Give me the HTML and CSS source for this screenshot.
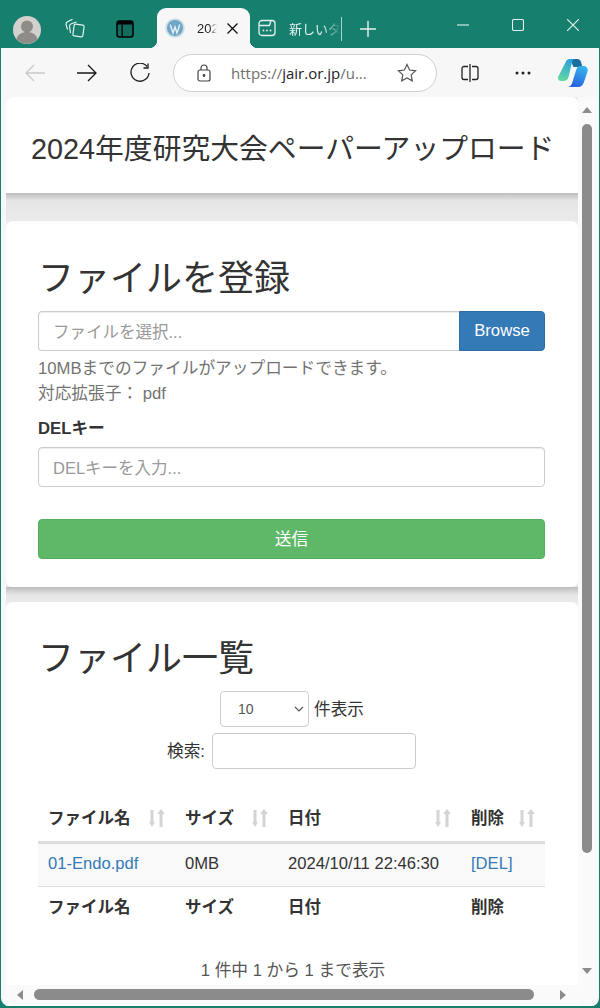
FILE: index.html
```html
<!DOCTYPE html>
<html lang="ja">
<head>
<meta charset="utf-8">
<title>2024年度研究大会ペーパーアップロード</title>
<link rel="stylesheet" href="styles.css">
</head>
<body>
<div class="window">
  <header class="tabbar">
    <div class="avatar"><svg width="28" height="28" viewBox="0 0 28 28"><circle cx="14" cy="14" r="14" fill="#d3d1cd"/><circle cx="14" cy="10.500" r="6" fill="#8f8c88"/><path d="M3.500 23c1.500-5 5.500-7 10.500-7s9 2 10.500 7a14 14 0 0 1-21 0z" fill="#8f8c88"/></svg></div>
    <div class="tb-icon tb-first"><svg width="20" height="20" viewBox="0 0 20 20" fill="none" stroke="#e4f2ef" stroke-width="1.200"><path d="M2.500 11.500L1 6.500Q.8 4.700 2.500 3.800L7.500 1.200"/><path d="M5.500 15L4.500 8.500Q4.400 6.500 6.300 5.800L11.500 4"/><rect x="8.500" y="6.500" width="10" height="12" rx="1.500" transform="rotate(8 13.500 12.500)"/></svg></div>
    <div class="tb-icon tb-second"><svg width="18" height="18" viewBox="0 0 18 18"><rect x="1" y="1" width="16" height="16" rx="2.500" fill="#136b5d" stroke="#000" stroke-width="1.500"/><rect x="1" y="1" width="16" height="3.500" fill="#000"/><rect x="5.500" y="4.500" width="1.300" height="12" fill="#000"/></svg></div>
    <div class="tab active">
      <svg width="20" height="20" viewBox="0 0 20 20"><circle cx="10" cy="10" r="9.800" fill="#c9dfea"/><circle cx="10" cy="10" r="8" fill="#6fa5c5"/><path d="M5.200 6.500L8 15l2-6 2 6 2.800-8.500" fill="none" stroke="#e6f0f5" stroke-width="1.400"/></svg>
      <span class="tab-title">202</span>
      <svg class="tab-x" width="11" height="11" viewBox="0 0 11 11" stroke="#111" stroke-width="1.300"><path d="M.5.500l10 10M10.500.500l-10 10"/></svg>
    </div>
    <div class="tab inactive">
      <svg width="18" height="18" viewBox="0 0 18 18" fill="none" stroke="#e4f2ef" stroke-width="1.300"><rect x="1" y="1.500" width="16" height="15" rx="3"/><path d="M1 6.500h10.500l1.500-5"/><circle cx="5.500" cy="11.500" r=".9" fill="#e4f2ef" stroke="none"/><circle cx="9" cy="11.500" r=".9" fill="#e4f2ef" stroke="none"/><circle cx="12.500" cy="11.500" r=".9" fill="#e4f2ef" stroke="none"/></svg>
      <span class="tab-title light">新しいタ</span>
    </div>
    <div class="divider"></div>
    <svg class="plus" width="18" height="18" viewBox="0 0 18 18" stroke="#e4f2ef" stroke-width="1.400"><path d="M9 1v16M1 9h16"/></svg>
    <div class="win-controls">
      <svg width="12" height="12" viewBox="0 0 12 12" stroke="#e4f2ef" stroke-width="1.100"><path d="M0 6h12"/></svg>
      <svg width="12" height="12" viewBox="0 0 12 12" fill="none" stroke="#e4f2ef" stroke-width="1.100"><rect x=".5" y=".5" width="11" height="11" rx="1.500"/></svg>
      <svg width="12" height="12" viewBox="0 0 12 12" stroke="#e4f2ef" stroke-width="1.100"><path d="M0 0l12 12M12 0L0 12"/></svg>
    </div>
  </header>

  <nav class="toolbar">
    <svg class="back" width="20" height="18" viewBox="0 0 20 18" fill="none" stroke="#c9c9c9" stroke-width="1.300"><path d="M20 9H1M9 1L1 9l8 8"/></svg>
    <svg class="forward" width="20" height="18" viewBox="0 0 20 18" fill="none" stroke="#1a1a1a" stroke-width="1.300"><path d="M0 9h19M11 1l8 8-8 8"/></svg>
    <svg class="reload" width="20" height="20" viewBox="0 0 20 20" fill="none" stroke="#1a1a1a" stroke-width="1.300"><path d="M17 3.500A9 9 0 1 0 19 10"/><path d="M18 .5v4.500h-4.500"/></svg>
    <div class="omnibox">
      <svg class="lock" width="14" height="18" viewBox="0 0 14 18" fill="none" stroke="#444" stroke-width="1.200"><rect x="1" y="6" width="12" height="11" rx="2"/><path d="M4 6V4a3 3 0 0 1 6 0v2"/><circle cx="7" cy="11.500" r=".8" fill="#444"/></svg>
      <span class="url"><span class="url-dim">https://</span>jair.or.jp<span class="url-dim">/u...</span></span>
      <svg class="star" width="20" height="20" viewBox="0 0 20 20" fill="none" stroke="#555" stroke-width="1.200"><path d="M10 1.500l2.600 5.500 6 .8-4.400 4.100 1.100 6-5.300-2.900-5.300 2.900 1.100-6L1.400 7.800l6-.8z"/></svg>
    </div>
    <svg class="split" width="18" height="18" viewBox="0 0 18 18" fill="none" stroke="#222" stroke-width="1.300"><path d="M7 2.500H3a2 2 0 0 0-2 2v9a2 2 0 0 0 2 2h4M11 2.500h4a2 2 0 0 1 2 2v9a2 2 0 0 1-2 2h-4M9 0v18"/></svg>
    <svg class="dots" width="16" height="4" viewBox="0 0 16 4" fill="#222"><circle cx="2" cy="2" r="1.500"/><circle cx="8" cy="2" r="1.500"/><circle cx="14" cy="2" r="1.500"/></svg>
    <svg class="copilot" width="30" height="28" viewBox="0 0 30 28"><defs><linearGradient id="cpa" x1=".6" y1="0" x2=".4" y2="1"><stop offset="0" stop-color="#2b9fdc"/><stop offset="1" stop-color="#62d8a0"/></linearGradient><linearGradient id="cpb" x1=".7" y1="0" x2=".3" y2="1"><stop offset="0" stop-color="#36b4ee"/><stop offset="1" stop-color="#2a5ee0"/></linearGradient></defs><path d="M12 0h7c2 0 3.500 1 4 3l1.500 5h-9z" fill="#1b6f9e"/><path d="M8.500 1.500C9.500.5 10.500 0 12 0h5c-1.500 0-2.500 1-3 3l-2.500 11C10.800 19 9 22 6 22H3C.8 22-.5 20 .3 17.500z" fill="url(#cpa)"/><path d="M22 7h3.500c3 0 5 2.500 4 5.500L26 23c-1 3-3 5-6 5H9c2.500 0 4-1 5-3.500L17.500 13C18.500 9 20 7 22 7z" fill="url(#cpb)"/></svg>
  </nav>

  <div class="viewport">
    <main class="page">
      <section class="card title-card">
        <h1 class="site-title">2024年度研究大会ペーパーアップロード</h1>
      </section>
      <div class="gap gap-a"></div>
      <section class="card form-card">
        <h2 class="section-title">ファイルを登録</h2>
        <div class="input-group">
          <div class="text-input grouped">ファイルを選択...</div>
          <div class="browse">Browse</div>
        </div>
        <p class="help">10MBまでのファイルがアップロードできます。<br>対応拡張子： pdf</p>
        <div class="field-label">DELキー</div>
        <div class="text-input">DELキーを入力...</div>
        <div class="submit">送信</div>
      </section>
      <div class="gap gap-b"></div>
      <section class="card list-card">
        <h2 class="section-title">ファイル一覧</h2>
        <div class="length-row">
          <div class="select">10<svg width="10" height="6" viewBox="0 0 10 6" fill="none" stroke="#555" stroke-width="1.100"><path d="M1 1l4 4 4-4"/></svg></div>
          <span class="row-label">件表示</span>
        </div>
        <div class="search-row">
          <span class="row-label">検索:</span>
          <div class="search-box"></div>
        </div>
        <table class="files">
          <colgroup><col class="c1"><col class="c2"><col class="c3"><col class="c4"></colgroup>
          <thead>
            <tr>
              <th>ファイル名<svg class="sort" width="16" height="18" viewBox="0 0 16 18" fill="#d4d4d4"><path d="M3 18L0 13h1.500V1h3v12H6zM12 0l4 5h-2.500v13h-3V5H8z"/></svg></th>
              <th>サイズ<svg class="sort" width="16" height="18" viewBox="0 0 16 18" fill="#d4d4d4"><path d="M3 18L0 13h1.500V1h3v12H6zM12 0l4 5h-2.500v13h-3V5H8z"/></svg></th>
              <th>日付<svg class="sort" width="16" height="18" viewBox="0 0 16 18" fill="#d4d4d4"><path d="M3 18L0 13h1.500V1h3v12H6zM12 0l4 5h-2.500v13h-3V5H8z"/></svg></th>
              <th>削除<svg class="sort" width="16" height="18" viewBox="0 0 16 18" fill="#d4d4d4"><path d="M3 18L0 13h1.500V1h3v12H6zM12 0l4 5h-2.500v13h-3V5H8z"/></svg></th>
            </tr>
          </thead>
          <tbody>
            <tr><td><a href="#">01-Endo.pdf</a></td><td>0MB</td><td>2024/10/11 22:46:30</td><td><a href="#">[DEL]</a></td></tr>
          </tbody>
          <tfoot>
            <tr><th>ファイル名</th><th>サイズ</th><th>日付</th><th>削除</th></tr>
          </tfoot>
        </table>
        <p class="info">1 件中 1 から 1 まで表示</p>
      </section>
    </main>
    <aside class="vscroll">
      <svg width="10" height="6" viewBox="0 0 10 6" fill="#8b8b8b"><path d="M5 0l5 6H0z"/></svg>
      <div class="vthumb"></div>
      <svg width="10" height="6" viewBox="0 0 10 6" fill="#8b8b8b"><path d="M0 0h10L5 6z"/></svg>
    </aside>
    <div class="hscroll">
      <svg width="6" height="10" viewBox="0 0 6 10" fill="#8b8b8b"><path d="M6 0v10L0 5z"/></svg>
      <div class="hthumb"></div>
      <svg width="6" height="10" viewBox="0 0 6 10" fill="#8b8b8b"><path d="M0 0l6 5-6 5z"/></svg>
    </div>
  </div>
</div>
</body>
</html>
```
FILE: styles.css
```css
* { box-sizing: border-box; }
html, body { margin: 0; height: 100%; overflow: hidden; }
body {
  font-family: "Liberation Sans", "Noto Sans CJK JP", sans-serif;
  font-size: 16.7px;
  color: #333;
  background: #167f6e;
}
svg { display: block; flex: none; }
.window { height: 1008px; display: flex; flex-direction: column; padding-bottom: 2px; }

.tabbar { height: 48px; flex: none; display: flex; align-items: flex-end; background: #167f6e; }
.avatar { margin: 0 0 4px 13px; }
.tb-first { margin: 0 0 10px 24px; }
.tb-second { margin: 0 0 10px 31px; }
.tab { height: 40px; display: flex; align-items: center; font-size: 13px; }
.tab.active {
  position: relative; width: 93px; margin-left: 23px; padding-left: 8px;
  background: #f7f7f7; border-radius: 9px 9px 0 0; color: #222;
}
.tab.active::before, .tab.active::after {
  content: ""; position: absolute; bottom: 0; width: 8px; height: 8px;
}
.tab.active::before { left: -8px; background: radial-gradient(circle at 0 0, transparent 8px, #f7f7f7 8.5px); }
.tab.active::after { right: -8px; background: radial-gradient(circle at 100% 0, transparent 8px, #f7f7f7 8.5px); }
.tab-title {
  margin-left: 12px; width: 20px; overflow: hidden; white-space: nowrap;
  -webkit-mask-image: linear-gradient(90deg, #000 65%, transparent);
  mask-image: linear-gradient(90deg, #000 65%, transparent);
}
.tab-x { margin-left: 10px; }
.tab.inactive { margin-left: 8px; width: 83px; color: #e4f2ef; }
.tab-title.light { margin-left: 13px; width: 52px; }
.divider { width: 1px; height: 24px; background: #a9d2ca; margin-bottom: 7px; }
.plus { margin: 0 0 10px 17px; }
.win-controls { margin: 0 21px 17px auto; display: flex; gap: 43px; }

.toolbar { height: 49px; flex: none; margin: 0 1px; display: flex; align-items: center; background: #f7f7f7; }
.back { margin-left: 24px; }
.forward { margin-left: 32px; }
.reload { margin-left: 33px; }
.omnibox {
  width: 264px; height: 38px; margin-left: 23px; display: flex; align-items: center;
  background: #fff; border: 1px solid #d0d0d0; border-radius: 19px; padding-left: 23px;
}
.url { margin-left: 20px; font-family: "Open Sans", "Liberation Sans", sans-serif; font-size: 15px; color: #222; white-space: nowrap; }
.url-dim { color: #6f6f6f; }
.star { margin-left: auto; margin-right: 19px; }
.split { margin-left: 24px; }
.dots { margin-left: 36px; }
.copilot { margin-left: 27px; }

.viewport { position: relative; flex: 1; min-height: 0; margin: 0 1px; background: #f7f7f7; overflow: hidden; padding-left: 5px; display: flex; border-radius: 0 0 8px 8px; }
.page { width: 572px; flex: none; background: #eaeaea; border-radius: 8px 0 0 0; overflow: hidden; }
.card { background: #fff; border-radius: 6px; }
.title-card { height: 96px; border-radius: 6px 6px 0 0; padding: 30px 25px 0; }
.site-title { margin: 0; font-size: 28.8px; font-weight: 400; line-height: 44px; white-space: nowrap; color: #333; }
.gap { background: linear-gradient(#bdbdbd, #e6e6e6 8px, #eaeaea); }
.gap-a { height: 28px; }
.gap-b { height: 15px; }
.form-card { height: 366px; padding: 32px 33px 0 32px; }
.list-card { height: 500px; padding: 31px 33px 0 32px; }
.section-title { margin: 0; font-size: 36px; font-weight: 400; line-height: 52px; white-space: nowrap; }

.input-group { display: flex; margin-top: 6px; }
.text-input {
  height: 40px; padding: 0 14px; display: flex; align-items: center; font-size: 16.5px;
  border: 1px solid #ccc; border-radius: 4px; color: #999; flex: 1;
  box-shadow: inset 0 1px 1px rgba(0, 0, 0, .075);
}
.text-input.grouped { border-radius: 4px 0 0 4px; border-right: 0; }
.browse {
  width: 86px; display: flex; align-items: center; justify-content: center;
  background: #337ab7; border: 1px solid #2e6da4; border-radius: 0 4px 4px 0; color: #fff;
}
.help { margin: 6px 0 0; line-height: 24.6px; color: #737373; }
.field-label { margin-top: 11px; font-weight: 700; line-height: 24px; }
.field-label + .text-input { margin-top: 6px; height: 40px; flex: none; }
.submit {
  height: 40px; margin-top: 32px; padding-bottom: 2px; display: flex; align-items: center; justify-content: center;
  background: #5fb868; border: 1px solid #55ae5e; border-radius: 4px; color: #fff;
}

.length-row { display: flex; align-items: center; justify-content: center; gap: 5px; margin-top: 6px; height: 36px; padding-left: 1px; }
.select {
  width: 89px; height: 36px; padding: 0 4px 0 17px; display: flex; align-items: center; justify-content: space-between;
  border: 1px solid #ccc; border-radius: 4px; font-size: 14px; color: #555;
}
.row-label { padding-bottom: 3px; }
.search-row { display: flex; align-items: center; justify-content: center; gap: 7px; margin-top: 6px; height: 36px; }
.search-box { width: 204px; height: 36px; border: 1px solid #ccc; border-radius: 4px; }

.files { width: 507px; margin-top: 26px; border-collapse: collapse; table-layout: fixed; }
.c1 { width: 137px; }
.c2 { width: 103px; }
.c3 { width: 183px; }
.c4 { width: 84px; }
.files th { text-align: left; padding: 0 10px 2px; height: 42px; position: relative; font-weight: 700; font-size: 16.5px; }
.files thead th { border-bottom: 3px solid #ddd; height: 47px; }
.files td { padding: 0 10px 2px; height: 44px; background: #f9f9f9; border-bottom: 1px solid #ddd; font-size: 16.6px; }
.files a { color: #337ab7; text-decoration: none; }
.sort { position: absolute; right: 10px; top: 14px; }
.info { margin: 32px 0 0; text-align: center; color: #555; line-height: 22px; padding-left: 3px; }

.vscroll {
  width: 20px; flex: none; display: flex; flex-direction: column; align-items: center; background: #fafafa;
  padding: 10px 3px 32px 0;
}
.vthumb { width: 10px; height: 729px; margin: 11px 0 auto; background: #8b8b8b; border-radius: 5px; }
.hscroll {
  position: absolute; left: 5px; right: 1px; bottom: 2px; height: 19px; padding: 0 32px 0 11px;
  display: flex; align-items: center; background: #fafafa; border-radius: 0 0 8px 8px;
}
.hthumb { width: 500px; height: 11px; margin: 0 auto 0 11px; background: #8b8b8b; border-radius: 6px; }
```
